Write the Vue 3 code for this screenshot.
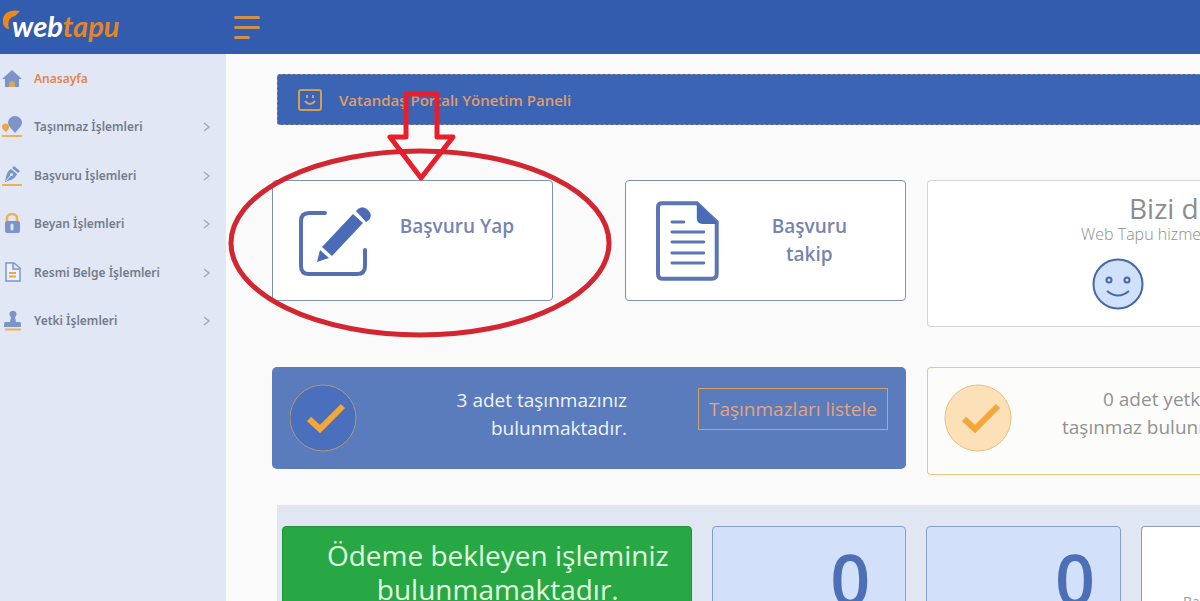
<script setup>
const menu = [
  { label: 'Anasayfa', icon: 'home', active: true },
  { label: 'Taşınmaz İşlemleri', icon: 'pin' },
  { label: 'Başvuru İşlemleri', icon: 'pen' },
  { label: 'Beyan İşlemleri', icon: 'lock' },
  { label: 'Resmi Belge İşlemleri', icon: 'file' },
  { label: 'Yetki İşlemleri', icon: 'stamp' },
]
</script>

<template>
  <div class="page">
    <header class="topbar">
      <a href="#" class="logo" aria-label="webtapu">
        <svg class="flame" viewBox="0 0 18 20" aria-hidden="true">
          <path d="M18 1C8-1 0 3 1 12c0 4 3 7 6 7C5 11 8 7 13 6z" fill="#ee8718" />
        </svg>
        <span class="logo-web">web</span><span class="logo-tapu">tapu</span>
      </a>
      <button class="burger" type="button" aria-label="Menü">
        <span></span><span></span><span></span>
      </button>
    </header>

    <div class="body">
      <nav class="sidebar">
        <div class="menu">
          <a v-for="item in menu" :key="item.label" href="#" class="item" :class="{ active: item.active }">
            <svg class="item-icon" viewBox="0 0 22 22" aria-hidden="true">
              <template v-if="item.icon === 'home'">
                <path d="M11 2 21 11h-3v8H4v-8H1z" fill="#7b95cb" />
                <path d="M8 19v-4q3-4 6 0v4z" fill="#d9a850" />
              </template>
              <template v-else-if="item.icon === 'pin'">
                <path d="M14 17C10 12 7 10 7 6.500a7 6.500 0 0 1 14 0c0 3.500-3 5.500-7 10.500z" fill="#7b95cb" />
                <path d="M5 16C3 14 1 13 1 11a3.500 3.500 0 0 1 7 0c0 2-1 3-3 5z" fill="#efa640" />
                <path d="M1 20h20" stroke="#efb050" stroke-width="2" />
              </template>
              <template v-else-if="item.icon === 'pen'">
                <path d="m13 1 6 5-2 2-6-5zM10 4l6 5c-2 5-6 6-12 8C5 11 6 6 10 4z" fill="#7b95cb" />
                <path d="m5 16 5-6" stroke="#e1e7f4" />
                <circle cx="10.500" cy="9.500" r="1.500" fill="#e1e7f4" />
                <path d="M1 20h20" stroke="#efb050" stroke-width="2" />
              </template>
              <template v-else-if="item.icon === 'lock'">
                <path d="M6 9V5a5 4 0 0 1 10 0v4" fill="none" stroke="#efb050" stroke-width="2.500" />
                <rect x="4" y="8" width="15" height="12" rx="2" fill="#7b95cb" />
                <path d="M11 12v4" stroke="#dce6fa" stroke-width="3" stroke-linecap="round" />
              </template>
              <template v-else-if="item.icon === 'file'">
                <path d="M5 1h8l6 5v13H5zM12 1v6h6" fill="#edf2fc" stroke="#7b95cb" stroke-width="1.500" />
                <path d="M8 11h7M8 14.500h7" stroke="#efa640" stroke-width="2" />
              </template>
              <template v-else>
                <path d="M9 12 10 7a3.500 3.500 0 1 1 4 0l1 5h4q1 0 1 5H3q0-5 1-5z" fill="#7b95cb" />
                <path d="M4 19.500h16" stroke="#efb050" stroke-width="2" />
              </template>
            </svg>
            <span>{{ item.label }}</span>
            <svg v-if="!item.active" class="chevron" viewBox="0 0 8 10" aria-hidden="true">
              <path d="m1 1 5 4-5 4" fill="none" stroke="#a4abb8" stroke-width="1.500" />
            </svg>
          </a>
        </div>
      </nav>

      <main class="main">
        <div class="banner">
          <svg viewBox="0 0 24 22" aria-hidden="true">
            <rect x="1" y="1" width="22" height="20" rx="2" fill="none" stroke="#d69c50" stroke-width="2" />
            <path d="M9 6v3m6-3v3M7 12q5 6 10 0" fill="none" stroke="#cfa070" stroke-width="2" />
          </svg>
          <strong>Vatandaş Portalı Yönetim Paneli</strong>
        </div>

        <div class="grid shortcuts">
          <div class="pair">
            <a href="#" class="card link-card">
              <svg class="edit-icon" viewBox="0 0 74 70" aria-hidden="true">
                <path d="M26 6H10Q2 6 2 14v45q0 8 8 8h48q8 0 8-8V43" fill="none" stroke="#5570b1" stroke-width="4" stroke-linecap="round" />
                <path d="m54 7 10 9-31 33-10-9zM21 43l9 8-12 4z" fill="#4a6cb7" />
                <path d="m57 4 2-2q5-4 10 1t1 10l-3 2z" fill="#4a6cb7" />
              </svg>
              <span>Başvuru Yap</span>
            </a>
            <a href="#" class="card link-card">
              <svg class="doc-icon" viewBox="0 0 64 80" aria-hidden="true">
                <path d="M6 2h35l20 19v52q0 5-5 5H6q-4 0-4-5V6q0-4 4-4z" fill="#fff" stroke="#5b75b5" stroke-width="4" />
                <path d="m42 2 19 19v2H47q-6 0-6-6V2z" fill="#4a6cb7" />
                <path d="M16 21h12M16 31h32M16 41h32M16 52h32M16 62h32" stroke="#5b75b5" stroke-width="3" stroke-linecap="round" />
              </svg>
              <span>Başvuru takip</span>
            </a>
          </div>
          <section class="open-card rating">
            <h2>Bizi d</h2>
            <p>Web Tapu hizme</p>
            <svg viewBox="0 0 52 52" aria-hidden="true">
              <circle cx="26" cy="26" r="24.500" fill="#cfe1fb" stroke="#4668a8" stroke-width="2" />
              <g fill="none" stroke="#4668a8" stroke-width="2">
                <circle cx="17" cy="22" r="2.500" /><circle cx="35" cy="22" r="2.500" />
                <path d="M15 33q11 9 22 0" />
              </g>
            </svg>
          </section>
        </div>

        <div class="grid summary">
          <section class="owned">
            <svg class="check" viewBox="0 0 68 68" aria-hidden="true">
              <circle cx="33" cy="34" r="33" fill="#4a6fbc" stroke="#b3967a" />
              <path d="m19 35 11 10 23-23" fill="none" stroke="#f4a638" stroke-width="6" />
            </svg>
            <p>3 adet taşınmazınız<br />bulunmaktadır.</p>
            <button type="button">Taşınmazları listele</button>
          </section>
          <section class="open-card authorised">
            <svg class="check" viewBox="0 0 68 68" aria-hidden="true">
              <circle cx="34" cy="34" r="33" fill="#fce0b8" stroke="#e3c07e" />
              <path d="m20 35 11 10 23-23" fill="none" stroke="#f4a638" stroke-width="6" />
            </svg>
            <p>0 adet yetk<br />taşınmaz bulunm</p>
          </section>
        </div>

        <section class="panel">
          <div class="payment">Ödeme bekleyen işleminiz bulunmamaktadır.</div>
          <div class="count">0</div>
          <div class="count second">0</div>
          <div class="open-card last">Ba</div>
        </section>

        <svg class="marks" viewBox="0 0 384 250" aria-hidden="true">
          <g fill="none" stroke="#d22630" stroke-width="5">
            <ellipse cx="192" cy="153" rx="189" ry="92" />
            <path d="M178 4h31v43h16l-32 41-31-41h16z" stroke="#e71f2c" stroke-linejoin="round" />
          </g>
        </svg>
      </main>
    </div>
  </div>
</template>

<style>
body {
  margin: 0;
}
</style>

<style scoped>
.page {
  height: 100vh;
  display: flex;
  flex-direction: column;
  overflow: hidden;
  font-family: "Open Sans", "Noto Sans", sans-serif;
  background: #fafafa;
}
.page * {
  box-sizing: border-box;
}
a {
  color: inherit;
  text-decoration: none;
}
h2,
p {
  margin: 0;
  font-weight: 400;
}
button {
  font: inherit;
  background: none;
  border: 0;
  padding: 0;
}
.topbar {
  flex: none;
  height: 54px;
  display: flex;
  align-items: center;
  background: #325cae;
}
.logo {
  position: relative;
  width: 234px;
  padding: 0 0 2px 12px;
  font: italic 700 29px/36px Lato, sans-serif;
}
.flame {
  position: absolute;
  left: 2px;
  top: 2px;
  width: 18px;
  height: 20px;
}
.logo-web {
  position: relative;
  color: #fff;
}
.logo-tapu {
  color: #e28526;
}
.burger {
  display: flex;
  flex-direction: column;
  gap: 7px;
  width: 26px;
}
.burger span {
  height: 3px;
  border-radius: 2px;
  background: #d08f4c;
}
.burger span:last-child {
  width: 16px;
}
.body {
  flex: 1;
  display: flex;
  min-height: 0;
}
.sidebar {
  flex: none;
  width: 226px;
  background: #e1e7f4;
}
.menu {
  display: grid;
  grid-auto-rows: 1fr;
  height: 291px;
}
.item {
  display: flex;
  align-items: center;
  padding: 1px 15px 0 1px;
  font: 600 12px/20px "Noto Sans", sans-serif;
  color: #757c8b;
}
.item.active {
  color: #e2854a;
}
.item-icon {
  width: 22px;
  height: 22px;
  margin-right: 11px;
}
.chevron {
  width: 8px;
  height: 10px;
  margin-left: auto;
}
.main {
  position: relative;
  flex: 1;
  min-width: 0;
  padding: 20px 0 0 46px;
}
.banner {
  display: flex;
  align-items: center;
  gap: 17px;
  height: 51px;
  margin: 0 0 55px 5px;
  padding-left: 20px;
  border: 1px dashed #7e8591;
  border-right: 0;
  border-radius: 3px 0 0 3px;
  background: #3c64b5;
  color: #e09c66;
  font-size: 15px;
}
.banner strong {
  font-weight: 600;
}
.banner svg {
  width: 24px;
  height: 22px;
}
.grid {
  display: grid;
  grid-template-columns: 634fr 273fr;
  gap: 21px;
}
.grid > * {
  min-width: 0;
}
.shortcuts {
  margin-bottom: 40px;
}
.pair {
  display: flex;
  justify-content: space-between;
  align-items: flex-start;
}
.card {
  border: 1px solid #7f91b2;
  border-radius: 4px;
  background: #fff;
}
.link-card {
  display: flex;
  width: 281px;
  height: 121px;
  padding: 20px 26px;
  color: #7485b2;
  font-size: 19px;
  font-weight: 600;
  line-height: 28px;
  text-align: center;
}
.link-card span {
  flex: 1;
  padding: 11px 0 0 15px;
}
.edit-icon {
  width: 74px;
  height: 70px;
  margin-top: 6px;
}
.doc-icon {
  width: 64px;
  height: 80px;
  margin-left: 4px;
}
.link-card .doc-icon + span {
  padding: 11px 32px 0 52px;
}
.open-card {
  border: 1px solid #d5d5d5;
  border-right: 0;
  border-radius: 4px 0 0 4px;
  background: #fff;
  white-space: nowrap;
}
.rating {
  height: 147px;
  padding-top: 9px;
  color: #8d8d8d;
}
.rating h2 {
  padding-left: 201px;
  font-size: 28px;
  line-height: 36px;
}
.rating p {
  padding-left: 153px;
  font-size: 16px;
  font-weight: 300;
  line-height: 16px;
}
.rating svg {
  display: block;
  width: 52px;
  height: 52px;
  margin: 16px 0 0 164px;
}
.summary {
  align-items: start;
  margin-bottom: 30px;
  font-size: 19px;
  line-height: 28px;
}
.owned {
  display: flex;
  align-items: flex-start;
  height: 102px;
  padding: 17px 18px;
  border-radius: 5px;
  background: #5a7bbc;
  color: #f0f3fa;
}
.check {
  flex: none;
  width: 68px;
  height: 68px;
}
.owned p {
  flex: 1;
  padding-top: 2px;
  text-align: right;
}
.owned button {
  height: 42px;
  margin: 4px 0 0 71px;
  padding: 0 10px;
  border: 1px solid #d6a26c;
  color: #e3a47c;
}
.authorised {
  display: flex;
  align-items: flex-start;
  height: 108px;
  padding: 16px 0 0 16px;
  border-color: #e9c882;
  background: #fcfcfb;
  color: #929292;
}
.authorised p {
  padding-top: 1px;
  margin-left: 50px;
  text-indent: 41px;
}
.panel {
  display: grid;
  grid-template-columns: 410fr 195fr 195fr 59fr;
  gap: 20px;
  height: 200px;
  margin-left: 5px;
  padding: 21px 0 0 5px;
  background: #e0e6f2;
}
.payment {
  padding: 11px 12px 0 34px;
  border: 1px solid #268e3d;
  border-radius: 4px;
  background: #28a745;
  color: #e0fae0;
  font-size: 28px;
  line-height: 34px;
  text-align: center;
}
.count {
  padding: 12px 35px 0 0;
  border: 1px solid #899dc8;
  border-radius: 4px;
  background: #d2e0fa;
  color: #4c6fb6;
  font-size: 70px;
  font-weight: 600;
  line-height: 80px;
  text-align: right;
}
.count.second {
  padding-right: 25px;
}
.last {
  padding: 63px 0 0 41px;
  border-color: #899dc8;
  color: #999;
  font-size: 14px;
  line-height: 24px;
}
.marks {
  position: absolute;
  left: 2px;
  top: 36px;
  width: 384px;
  height: 250px;
  pointer-events: none;
}
</style>
